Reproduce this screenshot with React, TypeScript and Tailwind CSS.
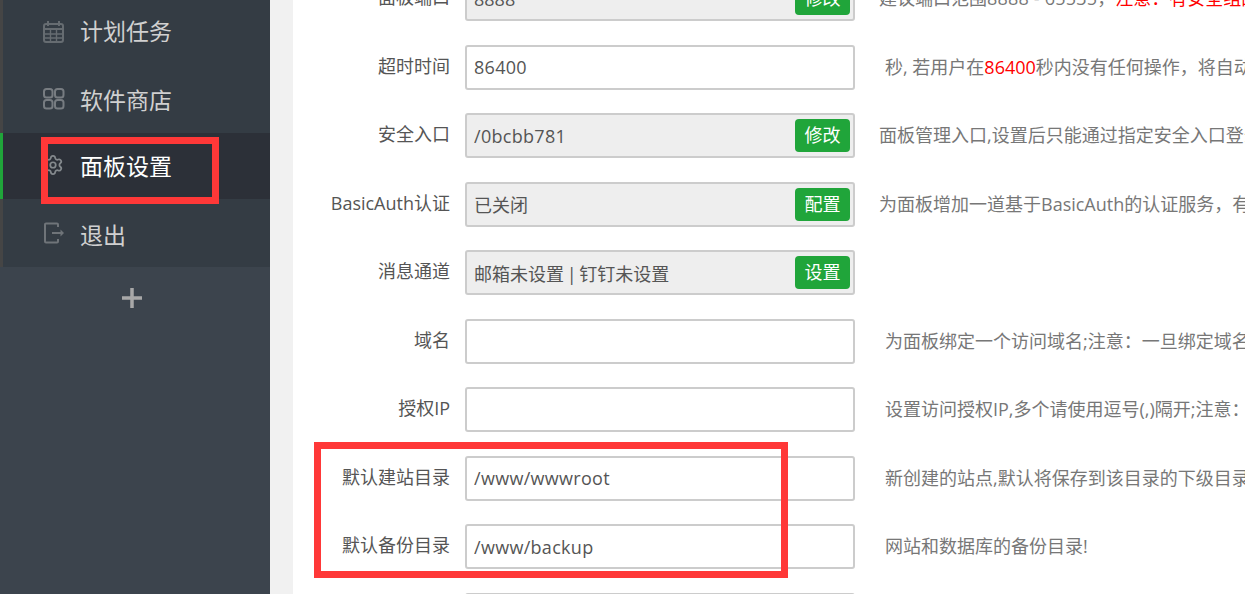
import { Settings } from "lucide-react";

const font = "font-['Open_Sans','Noto_Sans_CJK_SC',sans-serif]";

function CalendarIcon() {
  return (
    <svg width="22" height="22" viewBox="0 0 22 22" fill="none" stroke="#666c71" strokeWidth="2" className="shrink-0">
      <rect x="1" y="3" width="19" height="18" rx="2" />
      <path d="M5 0v5M16 0v5M1 8h19" />
      <path d="M7.5 8v13M13.5 8v13M1 13h19M1 17h19" strokeWidth="1.4" />
    </svg>
  );
}

function GridIcon() {
  return (
    <svg width="22" height="22" viewBox="0 0 22 22" fill="none" stroke="#777c81" strokeWidth="2" className="shrink-0">
      <rect x="1" y="1" width="8.5" height="8.5" rx="2.5" />
      <rect x="12" y="1" width="8.5" height="8.5" rx="2.5" />
      <rect x="1" y="12" width="8.5" height="8.5" rx="2.5" />
      <rect x="12" y="12" width="8.5" height="8.5" rx="2.5" />
    </svg>
  );
}

function GearIcon() {
  return <Settings size={22} strokeWidth={1.9} className="relative -left-[1px] -top-[1px] shrink-0 text-[#858a8e]" />;
}

function ExitIcon() {
  return (
    <svg width="22" height="22" viewBox="0 0 22 22" fill="none" stroke="#6f7479" strokeWidth="2" className="shrink-0">
      <path d="M15 5V2.5a1 1 0 0 0-1-1H3a1 1 0 0 0-1 1v17a1 1 0 0 0 1 1h11a1 1 0 0 0 1-1V17" />
      <path d="M9 11h11" />
      <path d="M17.5 7.5l3.5 3.5-3.5 3.5" fill="#6f7479" stroke="none" />
    </svg>
  );
}

const menu = [
  { name: "计划任务", icon: CalendarIcon, height: "h-[67px]", offset: "" },
  { name: "软件商店", icon: GridIcon, height: "h-[68px]", offset: "pt-[2px]" },
  { name: "面板设置", icon: GearIcon, height: "h-[66px]", offset: "", active: true },
  { name: "退出", icon: ExitIcon, height: "h-[68px]", offset: "pt-[4px]" },
];

type Row = {
  label: string;
  value: string;
  button?: string;
  note?: React.ReactNode;
};

const rows: Row[] = [
  {
    label: "面板端口",
    value: "8888",
    button: "修改",
    note: (
      <>
        建议端口范围<span className="tracking-[0.2px]">8888 - 65535</span>，<span className="text-[#ff0000]">注意：有安全组的服务器，请提前在安全组放行新端口</span>
      </>
    ),
  },
  {
    label: "超时时间",
    value: "86400",
    note: (
      <span className="pl-[6px]">
        秒, 若用户在<span className="text-[#ff0000]">86400</span>秒内没有任何操作，将自动退出面板
      </span>
    ),
  },
  {
    label: "安全入口",
    value: "/0bcbb781",
    button: "修改",
    note: "面板管理入口,设置后只能通过指定安全入口登录面板",
  },
  {
    label: "BasicAuth认证",
    value: "已关闭",
    button: "配置",
    note: "为面板增加一道基于BasicAuth的认证服务，有效防止面板被扫描",
  },
  { label: "消息通道", value: "邮箱未设置 | 钉钉未设置", button: "设置" },
  {
    label: "域名",
    value: "",
    note: <span className="pl-[6px]">为面板绑定一个访问域名;注意：一旦绑定域名,只能通过域名访问面板</span>,
  },
  {
    label: "授权IP",
    value: "",
    note: <span className="pl-[6px]">设置访问授权IP,多个请使用逗号(,)隔开;注意：一旦设置授权IP</span>,
  },
  {
    label: "默认建站目录",
    value: "/www/wwwroot",
    note: <span className="pl-[6px]">新创建的站点,默认将保存到该目录的下级目录</span>,
  },
  {
    label: "默认备份目录",
    value: "/www/backup",
    note: <span className="pl-[6px]">网站和数据库的备份目录!</span>,
  },
  { label: "", value: "" },
];

function SettingRow({ row }: { row: Row }) {
  const isLatin = row.value.startsWith("/") || row.value === "86400";

  return (
    <div className="flex h-[68.5px] shrink-0">
      <label className="flex h-[44.7px] w-[157px] shrink-0 items-center justify-end pb-[2px] text-[18px] text-[#555555]">
        {row.label}
      </label>
      <div className="relative ml-[15px] h-[44.7px] w-[390px] shrink-0">
        <input
          readOnly
          value={row.value}
          className={`h-full w-full rounded-[3px] border-2 border-[#cccccc] px-[7px] text-[18px] text-[#555555] outline-none [word-spacing:-2px] ${
            row.button ? "bg-[#eeeeee]" : "bg-white"
          } ${isLatin ? "tracking-[0.3px]" : ""}`}
        />
        {row.button && (
          <button className="absolute right-[5px] top-[6px] h-[33px] w-[55px] rounded-[4px] bg-[#20a53a] text-[18px] text-white">
            {row.button}
          </button>
        )}
      </div>
      <div className="flex h-[44.7px] items-center whitespace-nowrap pl-[24px] text-[18px] text-[#777777]">
        {row.note}
      </div>
    </div>
  );
}

export default function App() {
  return (
    <main className={`relative flex h-screen w-full overflow-hidden bg-[#f1f1f1] ${font}`}>
      {/* Sidebar */}
      <aside className="h-full w-[270px] shrink-0 bg-[#3c444d]">
        <div className="-mt-[2px]">
          {menu.map((item) => {
            const Icon = item.icon;
            return (
              <div
                key={item.name}
                className={`flex items-center border-l-[3px] pl-[40px] ${item.height} ${
                  item.active
                    ? "border-[#20a53a] bg-[#2c3038] text-white"
                    : "border-[#454545] bg-[#343c44] text-[#d0d0d0]"
                }`}
              >
                <Icon />
                <span className={`ml-[15px] text-[23px] ${item.offset}`}>{item.name}</span>
              </div>
            );
          })}
        </div>
        <div className="flex h-[62px] items-center justify-center pr-[7px]">
          <svg width="20" height="20" viewBox="0 0 20 20" stroke="#a8a8a8" strokeWidth="3.5">
            <path d="M0 10h20M10 0v20" />
          </svg>
        </div>
      </aside>

      {/* Settings form */}
      <section className="ml-[23px] h-full flex-1 overflow-hidden bg-white">
        <div className="-mt-[23.6px] flex flex-col">
          {rows.map((row, i) => (
            <SettingRow key={i} row={row} />
          ))}
        </div>
      </section>

      {/* Annotation boxes */}
      <div className="absolute left-[41px] top-[137px] h-[67px] w-[178px] border-[7px] border-[#ff3838]" />
      <div className="absolute left-[314px] top-[442px] h-[136px] w-[474px] border-[7px] border-[#ff3838]" />
    </main>
  );
}
